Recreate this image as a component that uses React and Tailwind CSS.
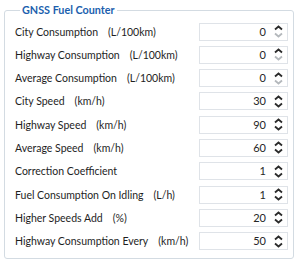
import React from "react";

const rows = [
  { label: "City Consumption", unit: "(L/100km)", value: 0, min: true },
  { label: "Highway Consumption", unit: "(L/100km)", value: 0, min: true },
  { label: "Average Consumption", unit: "(L/100km)", value: 0, min: true },
  { label: "City Speed", unit: "(km/h)", value: 30 },
  { label: "Highway Speed", unit: "(km/h)", value: 90 },
  { label: "Average Speed", unit: "(km/h)", value: 60 },
  { label: "Correction Coefficient", unit: "", value: 1 },
  { label: "Fuel Consumption On Idling", unit: "(L/h)", value: 1 },
  { label: "Higher Speeds Add", unit: "(%)", value: 20 },
  { label: "Highway Consumption Every", unit: "(km/h)", value: 50 },
];

function Chevron({ down, muted }) {
  return (
    <svg width="9" height="6" viewBox="0 0 9 6" className="block">
      <path
        d={down ? "M1 1.5 L4.5 4.5 L8 1.5" : "M1 4.5 L4.5 1.5 L8 4.5"}
        fill="none"
        stroke={muted ? "#b4b8bc" : "#2b2b2b"}
        strokeWidth="1.8"
      />
    </svg>
  );
}

function SpinBox({ value, min }) {
  return (
    <div className="flex h-[18px] w-[89px] items-center border border-[#dfe3e8] bg-white">
      <span className="flex-1 pr-[8px] text-right text-[11px] text-[#262626]">{value}</span>
      <div className="mr-[4px] flex flex-col gap-[1px]">
        <Chevron />
        <Chevron down muted={min} />
      </div>
    </div>
  );
}

export default function App() {
  return (
    <div
      className="h-[263px] w-[300px] bg-white pt-[3px] text-[10.5px] leading-[14px] text-[#1e1e1e]"
      style={{ fontFamily: 'Lato, "Noto Sans", sans-serif' }}
    >
      <fieldset className="ml-[4px] w-[290px] h-[256px] rounded-[3px] border border-[#d3dbe2] pl-[10px] pr-[5px]">
        <legend className="ml-[5px] px-[2px] text-[10.8px] font-bold text-[#1c5fae]">GNSS Fuel Counter</legend>
        <div className="flex flex-col gap-[5.3px] pt-[5.5px]">
          {rows.map((r) => (
            <div key={r.label} className="flex items-center">
              <span className="flex-1 whitespace-nowrap">
                {r.label}
                {r.unit && <span className="ml-[10px]">{r.unit}</span>}
              </span>
              <SpinBox value={r.value} min={r.min} />
            </div>
          ))}
        </div>
      </fieldset>
    </div>
  );
}
